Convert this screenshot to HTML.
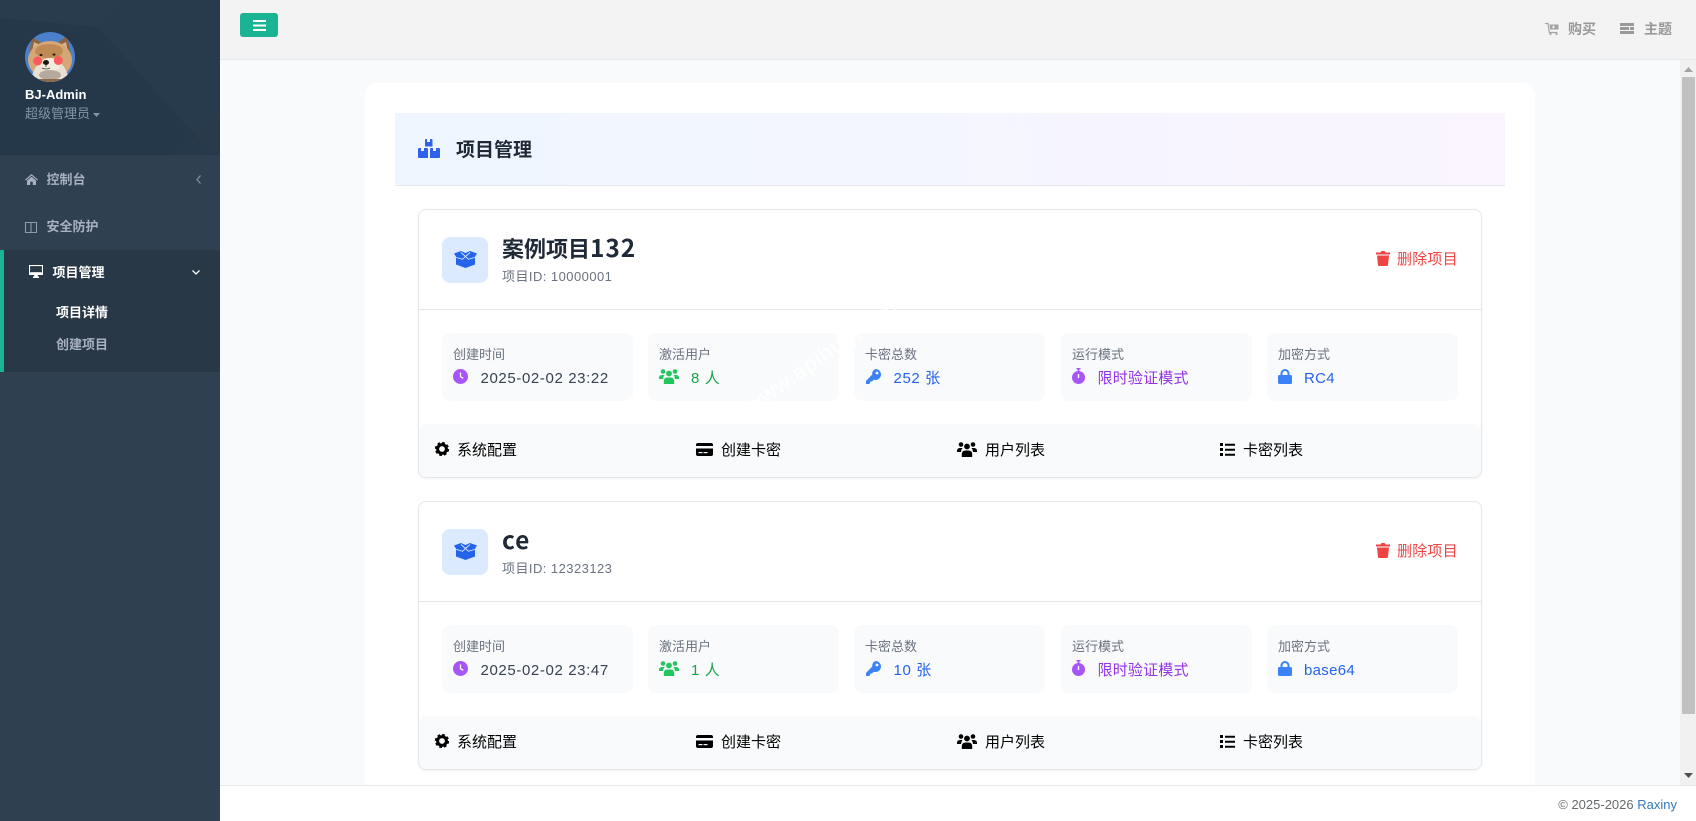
<!DOCTYPE html>
<html lang="zh-CN"><head><meta charset="utf-8"><title>项目管理</title>
<style>
*{box-sizing:border-box}
html,body{margin:0;padding:0;width:1696px;height:821px;overflow:hidden;background:#fff;font-family:"Liberation Sans","Noto Sans CJK SC",sans-serif;font-size:13px}
.a{position:absolute}
.t{position:absolute;white-space:nowrap;height:20px;line-height:20px}
svg{position:absolute;display:block;overflow:visible}
#side{left:0;top:0;width:220px;height:821px;background:#2f4050}
.nav{color:#a7b1c2;font-weight:700;font-size:13px}
.card{left:418px;width:1064px;height:269px;background:#fff;border:1px solid #e5e7eb;border-radius:8px;box-shadow:0 1px 2px rgba(0,0,0,.05)}
.line{left:-1px;top:99px;width:1064px;height:1px;background:#e5e7eb}
.ic{left:23px;top:27px;width:46px;height:46px;background:#dbeafe;border-radius:8px}
.ttl{left:83px;top:20px;height:36px;line-height:36px;font-size:22px;font-weight:700;color:#1f2937}
.ttl span{font-family:"Noto Sans CJK SC",sans-serif;font-size:24.500px;letter-spacing:.9px}
.id{left:83px;top:57px;font-size:13px;color:#6b7280;letter-spacing:.45px}
.del{left:978px;top:40px;color:#ef4444;font-size:15px;letter-spacing:.2px}
.st{top:123px;width:191px;height:68px;background:#f9fafb;border-radius:8px}
.lb{left:11px;top:12px;font-size:13px;color:#6b7280}
.v{top:36px;font-size:15px;letter-spacing:.62px}
.bar{left:0;top:214px;width:1062px;height:53px;background:#f9fafb;border-radius:8px}
.b{top:17px;font-size:15px;color:#000}
</style></head><body>

<div class="a" id="side">
 <div class="a" style="left:0;top:0;width:220px;height:155px;background:#26394a;overflow:hidden">
  <svg width="220" height="155" style="left:0;top:0"><polygon points="0,0 125,0 98,27 0,18" fill="#293c4d"/><polygon points="125,0 220,0 220,135 195,135 98,27" fill="#283b4c"/><polygon points="0,18 98,27 195,135 170,155 0,155" fill="#25384a"/><polygon points="195,135 220,115 220,155 215,155" fill="#293b4b"/></svg>
  <svg width="50" height="50" viewBox="0 0 50 50" style="left:25px;top:32px">
   <defs><clipPath id="cp"><circle cx="25" cy="25" r="25"/></clipPath></defs>
   <g clip-path="url(#cp)">
    <rect width="50" height="50" fill="#4a80cc"/>
    <polygon points="4,22 7,5 21,13" fill="#8a6444"/><polygon points="46,22 42,4 29,13" fill="#8a6444"/>
    <polygon points="7,20 9,10 17,14" fill="#d9b48e"/><polygon points="43,20 41,10 33,14" fill="#d9b48e"/>
    <ellipse cx="25" cy="28" rx="22" ry="19" fill="#d5a676"/>
    <ellipse cx="24" cy="19" rx="14" ry="7" fill="#c08a54"/>
    <path d="M6 50Q8 32 20 28H30Q42 32 44 50z" fill="#e8e0d2"/>
    <ellipse cx="25" cy="33" rx="10" ry="7" fill="#f2ecdf"/>
    <ellipse cx="25" cy="43" rx="11" ry="5" fill="#b5aa9c"/>
    <rect x="0" y="47" width="50" height="3" fill="#8a6a4a"/>
    <circle cx="12.700" cy="29" r="4.500" fill="#fa5a60"/><circle cx="33.300" cy="28.500" r="4.500" fill="#fa5a60"/>
    <ellipse cx="21" cy="30.500" rx="3" ry="2.500" fill="#1d1611"/>
    <path d="M21 33v2M17 36q4 2 8 0" stroke="#3a2d24" stroke-width=".8" fill="none"/>
    <ellipse cx="16" cy="23" rx="1.500" ry="1" fill="#1d1611"/><ellipse cx="29" cy="22.500" rx="1.500" ry="1" fill="#1d1611"/>
   </g>
  </svg>
  <div class="t" style="left:25px;top:85px;color:#fff;font-weight:700;font-size:13px">BJ-Admin</div>
  <div class="t" style="left:25px;top:104px;color:#8095a8;font-size:13px">超级管理员</div>
  <svg width="7" height="4" style="left:92.500px;top:113px"><polygon points="0,0 7,0 3.500,4" fill="#8095a8"/></svg>
 </div>

 <svg width="13" height="11" viewBox="0 0 13 11" style="left:25px;top:174px"><path d="M6.500 0L13 5.700l-.8.8L6.500 1.600.8 6.500 0 5.700zM2 6.500l4.500-3.800L11 6.500V11H7.800V7.800H5.200V11H2z" fill="#a7b1c2"/></svg>
 <div class="t nav" style="left:46.500px;top:170px">控制台</div>
 <svg width="5" height="9" style="left:196px;top:175px"><path d="M4.500.5L1 4.500l3.500 4" fill="none" stroke="#8095a8" stroke-width="1.200"/></svg>

 <svg width="12" height="11" style="left:25px;top:221.500px"><path d="M.5.500h11v10H.5zM6 .5v10" fill="none" stroke="#8d9bb0" stroke-width="1.100"/></svg>
 <div class="t nav" style="left:46.500px;top:217px">安全防护</div>

 <div class="a" style="left:0;top:250px;width:220px;height:122px;background:#293846;border-left:4px solid #1ab394"></div>
 <svg width="14" height="13" style="left:29px;top:265px"><path d="M0 0h14v10H8.800v1.500H10V13H4v-1.500h1.200V10H0zM1.200 1.200v7.300h11.600V1.200z" fill="#fff" fill-rule="evenodd"/><rect x="1.200" y="1.200" width="11.600" height="7.300" fill="#293846"/><rect x="1.200" y="7.200" width="11.600" height="1.500" fill="#fff"/></svg>
 <div class="t" style="left:52.500px;top:263px;color:#fff;font-weight:700">项目管理</div>
 <svg width="8" height="5" style="left:192px;top:270px"><path d="M.5.500L4 4 7.500.5" fill="none" stroke="#fff" stroke-width="1.300"/></svg>
 <div class="t" style="left:56px;top:302.500px;color:#fff;font-weight:700">项目详情</div>
 <div class="t" style="left:56px;top:335px;color:#a7b1c2;font-weight:700">创建项目</div>
</div>

<div class="a" style="left:220px;top:0;width:1476px;height:60px;background:#f3f3f3;border-bottom:1px solid #e7eaec"></div>
<div class="a" style="left:240px;top:13px;width:38px;height:24px;background:#1ab394;border-radius:3px"></div>
<svg width="13" height="11" style="left:253px;top:19.500px"><path d="M0 0h13v2H0zM0 4.500h13v2H0zM0 9h13v2H0z" fill="#fff"/></svg>
<svg width="14" height="12" style="left:1545px;top:23px"><path d="M0 .5h3l1.300 9h8" fill="none" stroke="#a3a3a3" stroke-width="1.200"/><path d="M4.500 1.500h9v5H5.200z" fill="#a3a3a3"/><path d="M8.500 2.500v3M7 4h3" stroke="#f3f3f3" stroke-width="1"/><circle cx="5.500" cy="11" r="1.100" fill="#a3a3a3"/><circle cx="11.500" cy="11" r="1.100" fill="#a3a3a3"/></svg>
<div class="t" style="left:1568px;top:19px;color:#999;font-weight:700;font-size:14px">购买</div>
<svg width="14" height="11" style="left:1620px;top:23px"><path d="M0 0h14v3H0zM0 4h9v3H0zM10 4h4v3h-4zM0 8h14v3H0z" fill="#999"/></svg>
<div class="t" style="left:1644px;top:19px;color:#999;font-weight:700;font-size:14px">主题</div>

<div class="a" id="main" style="left:220px;top:60px;width:1460px;height:725px;background:#f9fafc;overflow:hidden"></div>
<div class="a" style="left:365px;top:83px;width:1170px;height:702px;background:#fff;border-radius:12px 12px 0 0"></div>

<div class="a" style="left:395px;top:113px;width:1110px;height:73px;background:linear-gradient(90deg,#eff6ff,#faf5ff);border-bottom:1px solid #e5e7eb"></div>
<svg width="22" height="19" viewBox="0 0 22 19" style="left:418px;top:139px"><g fill="#2f62ea"><path d="M7.500 0h1.500v3h3V0h1.500q1 0 1 1v6.500h-7.500V1q0-1 1-1z"/><path d="M1 9h2v3h3V9h3q1 0 1 1v9H1q-1 0-1-1v-8q0-1 1-1z"/><path d="M13 9h2v3h3V9h3q1 0 1 1v8q0 1-1 1h-9v-9q0-1 1-1z"/></g></svg>
<div class="t" style="left:456px;top:141px;height:20px;font-size:19px;font-weight:700;color:#1f2937">项目管理</div>

<!-- Card 1 -->
<div class="a card" style="top:209px">
 <div class="a line"></div>
 <div class="a ic"></div>
 <svg width="23" height="17" viewBox="0 0 23 17" style="left:35px;top:41px"><path d="M0 2.500L7 0l4.500 2L16 0l7 2.500-2.500 4 .5.500v6.500L11.500 17 2 13.500V7l.5-.5z" fill="#2563eb"/><path d="M7 1.500L11.500 5.500 16 1.500M2.500 6.500L8.500 8.300 11.500 5.500 14.500 8.300 20.500 6.500" fill="none" stroke="#dbeafe" stroke-width=".9"/></svg>
 <div class="t ttl">案例项目<span>132</span></div>
 <div class="t id">项目ID: 10000001</div>
 <svg width="14" height="15" style="left:957px;top:40.500px"><path d="M0 1.500h4.500L5.500 0h3l1 1.500H14v2H0zM1 4.500h12L12 14q-.1 1-1.200 1H3.200Q2.100 15 2 14z" fill="#ef4444"/></svg>
 <div class="t del">删除项目</div>

 <div class="a st" style="left:23px"><div class="t lb">创建时间</div><svg width="15" height="15" style="left:11px;top:36px"><circle cx="7.500" cy="7.500" r="7.500" fill="#a855f7"/><path d="M7.500 3.500v4.200l2.800 1.600" fill="none" stroke="#fff" stroke-width="1.300"/></svg><div class="t v" style="left:38.500px;color:#374151">2025-02-02 23:22</div></div>
 <div class="a st" style="left:229px"><div class="t lb">激活用户</div><svg width="20" height="15" viewBox="0 0 20 15" style="left:11px;top:36px"><g fill="#22c55e"><circle cx="4" cy="2.500" r="2.300"/><circle cx="16" cy="2.500" r="2.300"/><circle cx="10" cy="4.500" r="2.900"/><path d="M0 9q0-3 3-3h2.500Q4 8 4 10H0zM20 9q0-3-3-3h-2.500q1.500 2 1.500 4h4zM4.800 15v-2.500q0-4 3.700-4h3q3.700 0 3.700 4V15z"/></g></svg><div class="t v" style="left:43px;color:#16a34a">8 人</div></div>
 <div class="a st" style="left:435px"><div class="t lb">卡密总数</div><svg width="15" height="15" viewBox="0 0 15 15" style="left:11.500px;top:36px"><path d="M9.500 0a5.500 5.500 0 1 1-1.800 10.700L6 12.500H4.200V14L3 15H0v-3l6.200-6.500A5.500 5.500 0 0 1 9.500 0z" fill="#3b82f6"/><circle cx="11" cy="4" r="1.400" fill="#f9fafb"/></svg><div class="t v" style="left:39.500px;color:#2563eb">252 张</div></div>
 <div class="a st" style="left:642px"><div class="t lb">运行模式</div><svg width="13" height="16" viewBox="0 0 13 16" style="left:11px;top:35px"><circle cx="6.500" cy="9.500" r="6.500" fill="#a855f7"/><rect x="4.500" y="0" width="4" height="1.500" fill="#a855f7"/><rect x="5.700" y="1" width="1.600" height="2.500" fill="#a855f7"/><path d="M6.500 6v4" stroke="#fff" stroke-width="1.400"/></svg><div class="t v" style="left:36.500px;color:#9333ea;letter-spacing:.2px">限时验证模式</div></div>
 <div class="a st" style="left:848px"><div class="t lb">加密方式</div><svg width="14" height="15" viewBox="0 0 14 15" style="left:10.500px;top:36px"><path d="M3.500 6.500V4.500a3.500 3.500 0 0 1 7 0v2" fill="none" stroke="#3b82f6" stroke-width="2"/><rect x="0" y="6" width="14" height="9" rx="1.500" fill="#3b82f6"/></svg><div class="t v" style="left:37px;color:#2563eb;letter-spacing:.3px">RC4</div></div>

 <div class="a bar">
  <svg width="14" height="14" viewBox="0 0 14 14" style="left:15.500px;top:18px"><circle cx="7" cy="7" r="4.400" fill="none" stroke="#000" stroke-width="3"/><circle cx="7" cy="7" r="6.200" fill="none" stroke="#000" stroke-width="1.800" stroke-dasharray="2.800 2.060"/></svg>
  <div class="t b" style="left:38px">系统配置</div>
  <svg width="17" height="13" style="left:276.500px;top:19px"><rect width="17" height="13" rx="2" fill="#000"/><rect x="0" y="3" width="17" height="2.500" fill="#f9fafb"/><rect x="2.500" y="9" width="4" height="1.200" fill="#f9fafb"/><rect x="7.500" y="9" width="4" height="1.200" fill="#f9fafb"/></svg>
  <div class="t b" style="left:302px">创建卡密</div>
  <svg width="20" height="15" viewBox="0 0 20 15" style="left:538px;top:18px"><g fill="#000"><circle cx="4" cy="2.500" r="2.300"/><circle cx="16" cy="2.500" r="2.300"/><circle cx="10" cy="4.500" r="2.900"/><path d="M0 9q0-3 3-3h2.500Q4 8 4 10H0zM20 9q0-3-3-3h-2.500q1.500 2 1.500 4h4zM4.800 15v-2.500q0-4 3.700-4h3q3.700 0 3.700 4V15z"/></g></svg>
  <div class="t b" style="left:566px">用户列表</div>
  <svg width="15" height="13" style="left:800.500px;top:19px"><path d="M0 0h3v3H0zM5 .7h10v2H5zM0 5h3v3H0zM5 5.700h10v2H5zM0 10h3v3H0zM5 10.700h10v2H5z" fill="#000"/></svg>
  <div class="t b" style="left:824px">卡密列表</div>
 </div>
</div>

<!-- Card 2 -->
<div class="a card" style="top:501px">
 <div class="a line"></div>
 <div class="a ic"></div>
 <svg width="23" height="17" viewBox="0 0 23 17" style="left:35px;top:41px"><path d="M0 2.500L7 0l4.500 2L16 0l7 2.500-2.500 4 .5.500v6.500L11.500 17 2 13.500V7l.5-.5z" fill="#2563eb"/><path d="M7 1.500L11.500 5.500 16 1.500M2.500 6.500L8.500 8.300 11.500 5.500 14.500 8.300 20.500 6.500" fill="none" stroke="#dbeafe" stroke-width=".9"/></svg>
 <div class="t ttl"><span>ce</span></div>
 <div class="t id">项目ID: 12323123</div>
 <svg width="14" height="15" style="left:957px;top:40.500px"><path d="M0 1.500h4.500L5.500 0h3l1 1.500H14v2H0zM1 4.500h12L12 14q-.1 1-1.200 1H3.200Q2.100 15 2 14z" fill="#ef4444"/></svg>
 <div class="t del">删除项目</div>

 <div class="a st" style="left:23px"><div class="t lb">创建时间</div><svg width="15" height="15" style="left:11px;top:36px"><circle cx="7.500" cy="7.500" r="7.500" fill="#a855f7"/><path d="M7.500 3.500v4.200l2.800 1.600" fill="none" stroke="#fff" stroke-width="1.300"/></svg><div class="t v" style="left:38.500px;color:#374151">2025-02-02 23:47</div></div>
 <div class="a st" style="left:229px"><div class="t lb">激活用户</div><svg width="20" height="15" viewBox="0 0 20 15" style="left:11px;top:36px"><g fill="#22c55e"><circle cx="4" cy="2.500" r="2.300"/><circle cx="16" cy="2.500" r="2.300"/><circle cx="10" cy="4.500" r="2.900"/><path d="M0 9q0-3 3-3h2.500Q4 8 4 10H0zM20 9q0-3-3-3h-2.500q1.500 2 1.500 4h4zM4.800 15v-2.500q0-4 3.700-4h3q3.700 0 3.700 4V15z"/></g></svg><div class="t v" style="left:43px;color:#16a34a">1 人</div></div>
 <div class="a st" style="left:435px"><div class="t lb">卡密总数</div><svg width="15" height="15" viewBox="0 0 15 15" style="left:11.500px;top:36px"><path d="M9.500 0a5.500 5.500 0 1 1-1.800 10.700L6 12.500H4.200V14L3 15H0v-3l6.200-6.500A5.500 5.500 0 0 1 9.500 0z" fill="#3b82f6"/><circle cx="11" cy="4" r="1.400" fill="#f9fafb"/></svg><div class="t v" style="left:39.500px;color:#2563eb">10 张</div></div>
 <div class="a st" style="left:642px"><div class="t lb">运行模式</div><svg width="13" height="16" viewBox="0 0 13 16" style="left:11px;top:35px"><circle cx="6.500" cy="9.500" r="6.500" fill="#a855f7"/><rect x="4.500" y="0" width="4" height="1.500" fill="#a855f7"/><rect x="5.700" y="1" width="1.600" height="2.500" fill="#a855f7"/><path d="M6.500 6v4" stroke="#fff" stroke-width="1.400"/></svg><div class="t v" style="left:36.500px;color:#9333ea;letter-spacing:.2px">限时验证模式</div></div>
 <div class="a st" style="left:848px"><div class="t lb">加密方式</div><svg width="14" height="15" viewBox="0 0 14 15" style="left:10.500px;top:36px"><path d="M3.500 6.500V4.500a3.500 3.500 0 0 1 7 0v2" fill="none" stroke="#3b82f6" stroke-width="2"/><rect x="0" y="6" width="14" height="9" rx="1.500" fill="#3b82f6"/></svg><div class="t v" style="left:37px;color:#2563eb;letter-spacing:.3px">base64</div></div>

 <div class="a bar">
  <svg width="14" height="14" viewBox="0 0 14 14" style="left:15.500px;top:18px"><circle cx="7" cy="7" r="4.400" fill="none" stroke="#000" stroke-width="3"/><circle cx="7" cy="7" r="6.200" fill="none" stroke="#000" stroke-width="1.800" stroke-dasharray="2.800 2.060"/></svg>
  <div class="t b" style="left:38px">系统配置</div>
  <svg width="17" height="13" style="left:276.500px;top:19px"><rect width="17" height="13" rx="2" fill="#000"/><rect x="0" y="3" width="17" height="2.500" fill="#f9fafb"/><rect x="2.500" y="9" width="4" height="1.200" fill="#f9fafb"/><rect x="7.500" y="9" width="4" height="1.200" fill="#f9fafb"/></svg>
  <div class="t b" style="left:302px">创建卡密</div>
  <svg width="20" height="15" viewBox="0 0 20 15" style="left:538px;top:18px"><g fill="#000"><circle cx="4" cy="2.500" r="2.300"/><circle cx="16" cy="2.500" r="2.300"/><circle cx="10" cy="4.500" r="2.900"/><path d="M0 9q0-3 3-3h2.500Q4 8 4 10H0zM20 9q0-3-3-3h-2.500q1.500 2 1.500 4h4zM4.800 15v-2.500q0-4 3.700-4h3q3.700 0 3.700 4V15z"/></g></svg>
  <div class="t b" style="left:566px">用户列表</div>
  <svg width="15" height="13" style="left:800.500px;top:19px"><path d="M0 0h3v3H0zM5 .7h10v2H5zM0 5h3v3H0zM5 5.700h10v2H5zM0 10h3v3H0zM5 10.700h10v2H5z" fill="#000"/></svg>
  <div class="t b" style="left:824px">卡密列表</div>
 </div>
</div>

<div class="t" style="left:748px;top:396px;width:220px;height:24px;line-height:24px;font-size:22px;color:#fff;transform:rotate(-35deg);transform-origin:left center;letter-spacing:1px">www.apihug.com</div>

<!-- scrollbar -->
<div class="a" style="left:1680px;top:60px;width:16px;height:725px;background:#f1f1f1"></div>
<svg width="9" height="5" style="left:1684px;top:67px"><polygon points="4.500,0 9,5 0,5" fill="#a3a3a3"/></svg>
<div class="a" style="left:1682px;top:77px;width:13px;height:637px;background:#c1c1c1"></div>
<svg width="9" height="5" style="left:1684px;top:773px"><polygon points="0,0 9,0 4.500,5" fill="#505050"/></svg>

<!-- footer -->
<div class="a" style="left:220px;top:785px;width:1476px;height:36px;background:#fff;border-top:1px solid #e7eaec"></div>
<div class="t" style="right:19px;top:795px;font-size:13px;color:#676a6c">© 2025-2026 <span style="color:#337ab7">Raxiny</span></div>
</body></html>
